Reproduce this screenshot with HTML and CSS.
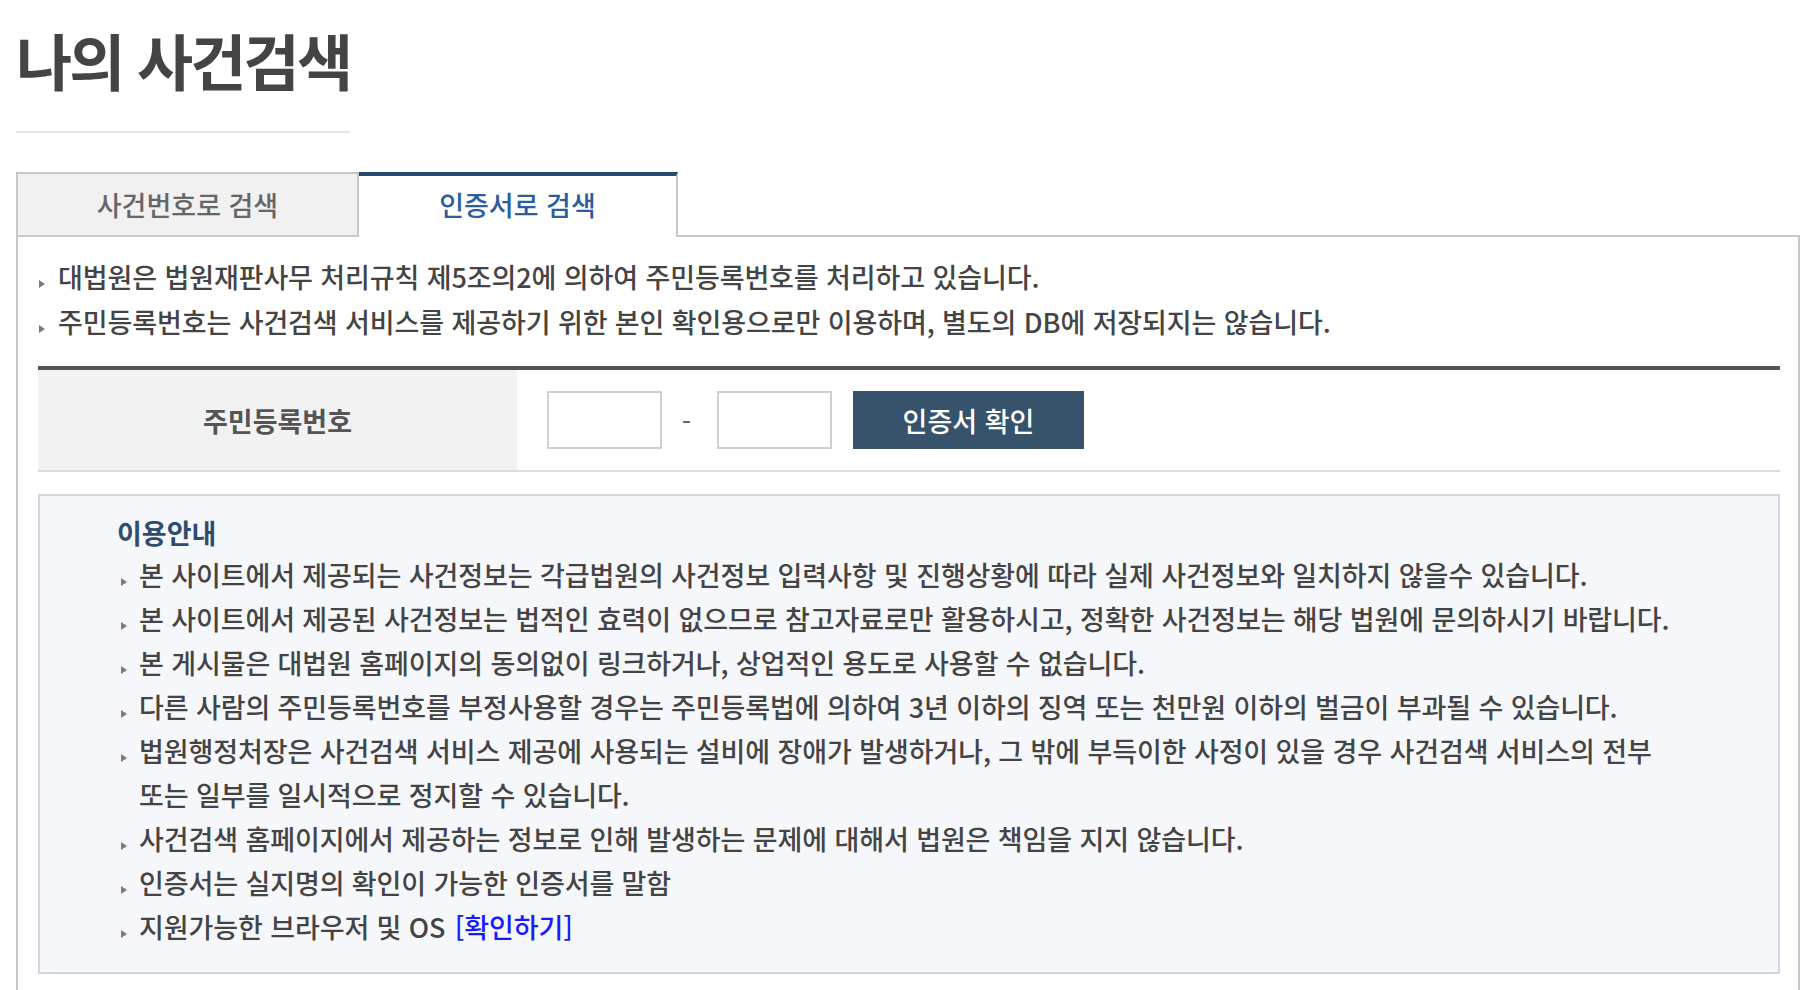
FILE: index.html
```html
<!DOCTYPE html>
<html lang="ko">
<head>
<meta charset="utf-8">
<title>나의 사건검색</title>
<link rel="stylesheet" href="styles.css">
</head>
<body>
<div class="page">
  <h1 class="page-title">나의 사건검색</h1>

  <div class="tabs">
    <a class="tab tab-inactive">사건번호로 검색</a>
    <a class="tab tab-active">인증서로 검색</a>
  </div>

  <div class="panel">
    <ul class="notice">
      <li>대법원은 법원재판사무 처리규칙 제5조의2에 의하여 주민등록번호를 처리하고 있습니다.</li>
      <li>주민등록번호는 사건검색 서비스를 제공하기 위한 본인 확인용으로만 이용하며, 별도의 DB에 저장되지는 않습니다.</li>
    </ul>

    <div class="cert-row">
      <div class="cert-label">주민등록번호</div>
      <div class="cert-field">
        <input class="ssn" type="text" aria-label="주민등록번호 앞자리">
        <span class="dash">-</span>
        <input class="ssn" type="password" aria-label="주민등록번호 뒷자리">
        <button class="btn-cert" type="button">인증서 확인</button>
      </div>
    </div>

    <div class="guide">
      <h2 class="guide-title">이용안내</h2>
      <ul class="guide-list">
        <li>본 사이트에서 제공되는 사건정보는 각급법원의 사건정보 입력사항 및 진행상황에 따라 실제 사건정보와 일치하지 않을수 있습니다.</li>
        <li>본 사이트에서 제공된 사건정보는 법적인 효력이 없으므로 참고자료로만 활용하시고, 정확한 사건정보는 해당 법원에 문의하시기 바랍니다.</li>
        <li>본 게시물은 대법원 홈페이지의 동의없이 링크하거나, 상업적인 용도로 사용할 수 없습니다.</li>
        <li>다른 사람의 주민등록번호를 부정사용할 경우는 주민등록법에 의하여 3년 이하의 징역 또는 천만원 이하의 벌금이 부과될 수 있습니다.</li>
        <li>법원행정처장은 사건검색 서비스 제공에 사용되는 설비에 장애가 발생하거나, 그 밖에 부득이한 사정이 있을 경우 사건검색 서비스의 전부<br>또는 일부를 일시적으로 정지할 수 있습니다.</li>
        <li>사건검색 홈페이지에서 제공하는 정보로 인해 발생하는 문제에 대해서 법원은 책임을 지지 않습니다.</li>
        <li>인증서는 실지명의 확인이 가능한 인증서를 말함</li>
        <li>지원가능한 브라우저 및 OS <a class="guide-link" href="#">[확인하기]</a></li>
      </ul>
    </div>
  </div>
</div>
</body>
</html>
```

FILE: styles.css
```css
* {
  box-sizing: border-box;
}

html,
body {
  margin: 0;
  padding: 0;
  background: #ffffff;
}

body {
  font-family: "Noto Sans CJK KR", "Noto Sans", sans-serif;
  color: #444444;
}

.page {
  padding: 0 18px 0 16px;
}

.page-title {
  margin: 0;
  width: 334px;
  padding-top: 28px;
  padding-bottom: 39px;
  font-size: 61px;
  line-height: 64px;
  font-weight: 700;
  letter-spacing: -2.8px;
  white-space: nowrap;
  color: #444444;
  border-bottom: 2px solid #e6e6e6;
}

/* tabs */
.tabs {
  display: flex;
  margin-top: 39px;
}

.tab {
  display: flex;
  align-items: center;
  justify-content: center;
  height: 63px;
  font-size: 27px;
  font-weight: 500;
  text-decoration: none;
}

.tab-inactive {
  width: 343px;
  background: #f1f1f1;
  border: 2px solid #c8c8c8;
  border-bottom: none;
  color: #666666;
}

.tab-active {
  position: relative;
  z-index: 1;
  width: 319px;
  height: 65px;
  margin-bottom: -2px;
  padding-bottom: 4px;
  background: #ffffff;
  border-top: 4px solid #264b70;
  border-right: 2px solid #c8c8c8;
  color: #2d5c9f;
}

/* panel */
.panel {
  border: 2px solid #c8c8c8;
  padding: 17px 18px 60px 20px;
}

.notice {
  margin: 0 0 22px;
  padding: 0;
  list-style: none;
}

.notice li,
.guide-list li {
  position: relative;
  font-size: 27px;
  font-weight: 500;
  letter-spacing: -0.1px;
}

.notice li {
  padding-left: 20px;
  line-height: 45px;
}

.notice li::before,
.guide-list li::before {
  content: "";
  position: absolute;
  left: 1px;
  top: 26px;
  border-left: 6px solid #7a7a7a;
  border-top: 4px solid transparent;
  border-bottom: 4px solid transparent;
}

/* certificate row */
.cert-row {
  display: flex;
  height: 106px;
  border-top: 4px solid #555555;
  border-bottom: 2px solid #dddddd;
}

.cert-label {
  display: flex;
  align-items: center;
  justify-content: center;
  width: 479px;
  background: #f2f2f2;
  font-size: 27px;
  font-weight: 700;
  color: #555555;
}

.cert-field {
  display: flex;
  align-items: center;
  padding-left: 30px;
}

.ssn {
  width: 115px;
  height: 58px;
  margin: 0;
  padding: 0 8px;
  border: 2px solid #d0d0d0;
  background: #ffffff;
  font-size: 22px;
  outline: none;
}

.dash {
  width: 55px;
  padding-right: 6px;
  text-align: center;
  font-size: 27px;
  color: #666666;
}

.btn-cert {
  width: 231px;
  height: 58px;
  margin: 0 0 0 21px;
  padding: 0;
  border: 0;
  background: #37536b;
  color: #ffffff;
  font-family: inherit;
  font-size: 27px;
  font-weight: 500;
}

/* guide box */
.guide {
  margin-top: 22px;
  padding: 17px 40px 23px 77px;
  border: 2px solid #d3d6de;
  background: #f6f7fb;
}

.guide-title {
  margin: 0;
  font-size: 27px;
  line-height: 40px;
  font-weight: 700;
  color: #2f4c6c;
}

.guide-list {
  margin: 0;
  padding: 0;
  list-style: none;
}

.guide-list li {
  padding-left: 22px;
  line-height: 44px;
}

.guide-list li::before {
  left: 4px;
  top: 25px;
}

.guide-link {
  margin-left: 2px;
  color: #1a1aff;
  text-decoration: none;
}
```
